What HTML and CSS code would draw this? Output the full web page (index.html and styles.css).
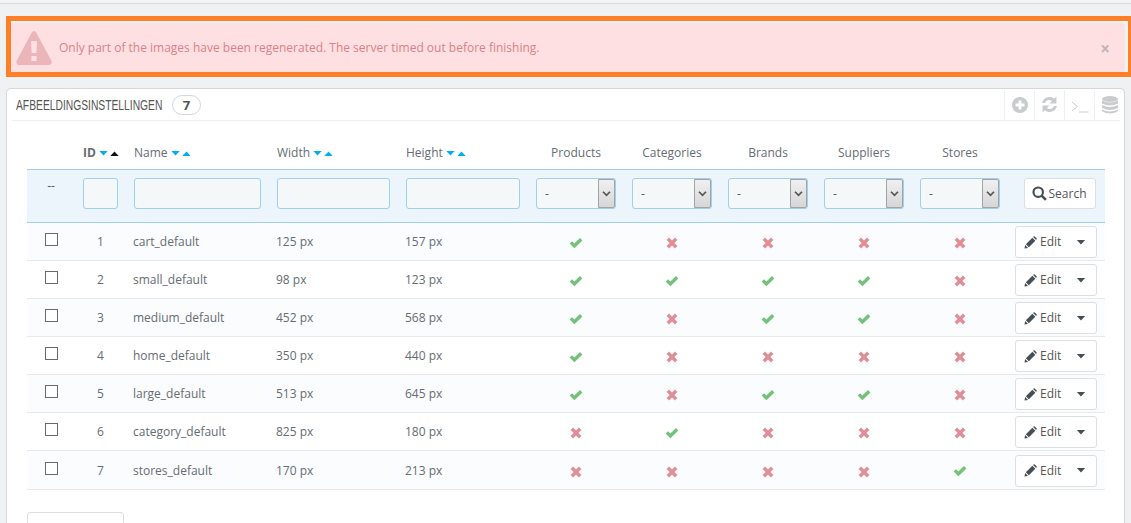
FILE: index.html
```html
<!DOCTYPE html>
<html lang="en">
<head>
<meta charset="utf-8">
<title>Afbeeldingsinstellingen</title>
<link rel="stylesheet" href="styles.css">
</head>
<body>
<svg class="defs" width="0" height="0" aria-hidden="true">
  <symbol id="yes" viewBox="0 0 14 12"><path d="M0.6 6.6 L3 4.2 L5.4 6.6 L11 1 L13.4 3.4 L5.4 11.2 Z"/></symbol>
  <symbol id="no" viewBox="0 0 12 12"><path d="M3 0.6 L6 3.6 L9 0.6 L11.4 3 L8.4 6 L11.4 9 L9 11.4 L6 8.4 L3 11.4 L0.6 9 L3.6 6 L0.6 3 Z"/></symbol>
  <symbol id="pencil" viewBox="0 0 14 14"><path d="M0.5 13.5 L1.2 9.6 L4.4 12.8 Z M2 8.8 L9 1.8 L12.2 5 L5.2 12 Z M9.8 1 L10.6 0.4 Q11 0.1 11.5 0.5 L13.5 2.5 Q13.9 3 13.5 3.4 L13 4.2 Z"/></symbol>
  <symbol id="caret" viewBox="0 0 10 6"><path d="M0 0 H10 L5 5.5 Z"/></symbol>
  <symbol id="chev" viewBox="0 0 10 8"><path d="M1 2 L5 6 L9 2" fill="none" stroke="currentColor" stroke-width="2"/></symbol>
</svg>
<div class="topline"></div>
<div class="frame">
  <div class="alert">
    <svg class="alert-icon" viewBox="0 0 36 34"><path fill-rule="evenodd" d="M18 0 Q19.5 0 20.5 2 L35.5 30 Q36.5 33.5 33 34 H3 Q-0.5 33.5 0.5 30 L15.5 2 Q16.5 0 18 0 Z M15 10 L15.6 22 H20.4 L21 10 Z M15.4 25 V30 H20.6 V25 Z"/></svg>
    <span class="alert-text">Only part of the images have been regenerated. The server timed out before finishing.</span>
    <span class="alert-close">×</span>
  </div>
</div>
<div class="panel">
  <div class="panel-head">
    <span class="title"><span class="title-text">AFBEELDINGSINSTELLINGEN</span></span>
    <span class="count">7</span>
    <div class="tools">
      <span class="tool"><svg class="tool-icon" viewBox="0 0 16 16"><path fill-rule="evenodd" d="M8 0 A8 8 0 1 1 8 16 A8 8 0 1 1 8 0 Z M6.6 3.5 V6.6 H3.5 V9.4 H6.6 V12.5 H9.4 V9.4 H12.5 V6.6 H9.4 V3.5 Z"/></svg></span>
      <span class="tool"><svg class="tool-icon refresh" viewBox="0 0 16 16"><path d="M14.5 0.5 V7 H8 L10.4 4.6 A4.3 4.3 0 0 0 3.7 6.5 H1 A7 7 0 0 1 12.4 2.6 Z M1.5 15.5 V9 H8 L5.6 11.4 A4.3 4.3 0 0 0 12.3 9.5 H15 A7 7 0 0 1 3.6 13.4 Z"/></svg></span>
      <span class="tool"><svg class="tool-icon term" viewBox="0 0 18 12"><path d="M1 1 L6.5 5.5 L1 10 M8 11 H17.5" fill="none" stroke-width="1"/></svg></span>
      <span class="tool"><svg class="tool-icon db" viewBox="0 0 16 18"><ellipse cx="8" cy="3" rx="8" ry="3"/><path d="M0 4.6 Q8 8.6 16 4.6 V7.6 Q8 11.6 0 7.6 Z M0 9 Q8 13 16 9 V12 Q8 16 0 12 Z M0 13.4 Q8 17.4 16 13.4 V15 Q8 20 0 15 Z"/></svg></span>
    </div>
  </div>
  <table class="grid">
    <colgroup>
      <col class="c-check"><col class="c-id"><col class="c-name"><col class="c-w"><col class="c-h">
      <col class="c-sel"><col class="c-sel"><col class="c-sel"><col class="c-sel"><col class="c-sel"><col class="c-act">
    </colgroup>
    <thead>
      <tr class="heads">
        <th></th>
        <th class="left id-head">ID<span class="sort"><svg class="sort-down"><use href="#caret"/></svg><svg class="sort-up active"><use href="#caret"/></svg></span></th>
        <th class="left">Name<span class="sort"><svg class="sort-down"><use href="#caret"/></svg><svg class="sort-up"><use href="#caret"/></svg></span></th>
        <th class="left">Width<span class="sort"><svg class="sort-down"><use href="#caret"/></svg><svg class="sort-up"><use href="#caret"/></svg></span></th>
        <th class="left">Height<span class="sort"><svg class="sort-down"><use href="#caret"/></svg><svg class="sort-up"><use href="#caret"/></svg></span></th>
        <th>Products</th><th>Categories</th><th>Brands</th><th>Suppliers</th><th>Stores</th><th></th>
      </tr>
      <tr class="filters">
        <th class="dashes">--</th>
        <th><input class="field" type="text" aria-label="ID"></th>
        <th><input class="field" type="text" aria-label="Name"></th>
        <th><input class="field" type="text" aria-label="Width"></th>
        <th><input class="field" type="text" aria-label="Height"></th>
        <th><div class="select"><select aria-label="Products"><option>-</option></select><span class="arrow"><svg><use href="#chev"/></svg></span></div></th>
        <th><div class="select"><select aria-label="Categories"><option>-</option></select><span class="arrow"><svg><use href="#chev"/></svg></span></div></th>
        <th><div class="select"><select aria-label="Brands"><option>-</option></select><span class="arrow"><svg><use href="#chev"/></svg></span></div></th>
        <th><div class="select"><select aria-label="Suppliers"><option>-</option></select><span class="arrow"><svg><use href="#chev"/></svg></span></div></th>
        <th><div class="select"><select aria-label="Stores"><option>-</option></select><span class="arrow"><svg><use href="#chev"/></svg></span></div></th>
        <th class="search-cell"><button class="btn search" type="button"><svg class="search-icon" viewBox="0 0 14 14"><circle cx="5.8" cy="5.8" r="4.4" fill="none" stroke-width="2"/><path d="M9 9 L13 13" fill="none" stroke-width="2.4"/></svg>Search</button></th>
      </tr>
    </thead>
    <tbody>
      <tr><td class="chk"><span class="box"></span></td><td class="num">1</td><td>cart_default</td><td>125 px</td><td>157 px</td>
        <td class="st"><svg class="yes"><use href="#yes"/></svg></td><td class="st"><svg class="no"><use href="#no"/></svg></td><td class="st"><svg class="no"><use href="#no"/></svg></td><td class="st"><svg class="no"><use href="#no"/></svg></td><td class="st"><svg class="no"><use href="#no"/></svg></td>
        <td class="act"><button class="btn edit" type="button"><svg class="pencil"><use href="#pencil"/></svg>Edit<svg class="drop"><use href="#caret"/></svg></button></td></tr>
      <tr><td class="chk"><span class="box"></span></td><td class="num">2</td><td>small_default</td><td>98 px</td><td>123 px</td>
        <td class="st"><svg class="yes"><use href="#yes"/></svg></td><td class="st"><svg class="yes"><use href="#yes"/></svg></td><td class="st"><svg class="yes"><use href="#yes"/></svg></td><td class="st"><svg class="yes"><use href="#yes"/></svg></td><td class="st"><svg class="no"><use href="#no"/></svg></td>
        <td class="act"><button class="btn edit" type="button"><svg class="pencil"><use href="#pencil"/></svg>Edit<svg class="drop"><use href="#caret"/></svg></button></td></tr>
      <tr><td class="chk"><span class="box"></span></td><td class="num">3</td><td>medium_default</td><td>452 px</td><td>568 px</td>
        <td class="st"><svg class="yes"><use href="#yes"/></svg></td><td class="st"><svg class="no"><use href="#no"/></svg></td><td class="st"><svg class="yes"><use href="#yes"/></svg></td><td class="st"><svg class="yes"><use href="#yes"/></svg></td><td class="st"><svg class="no"><use href="#no"/></svg></td>
        <td class="act"><button class="btn edit" type="button"><svg class="pencil"><use href="#pencil"/></svg>Edit<svg class="drop"><use href="#caret"/></svg></button></td></tr>
      <tr><td class="chk"><span class="box"></span></td><td class="num">4</td><td>home_default</td><td>350 px</td><td>440 px</td>
        <td class="st"><svg class="yes"><use href="#yes"/></svg></td><td class="st"><svg class="no"><use href="#no"/></svg></td><td class="st"><svg class="no"><use href="#no"/></svg></td><td class="st"><svg class="no"><use href="#no"/></svg></td><td class="st"><svg class="no"><use href="#no"/></svg></td>
        <td class="act"><button class="btn edit" type="button"><svg class="pencil"><use href="#pencil"/></svg>Edit<svg class="drop"><use href="#caret"/></svg></button></td></tr>
      <tr><td class="chk"><span class="box"></span></td><td class="num">5</td><td>large_default</td><td>513 px</td><td>645 px</td>
        <td class="st"><svg class="yes"><use href="#yes"/></svg></td><td class="st"><svg class="no"><use href="#no"/></svg></td><td class="st"><svg class="yes"><use href="#yes"/></svg></td><td class="st"><svg class="yes"><use href="#yes"/></svg></td><td class="st"><svg class="no"><use href="#no"/></svg></td>
        <td class="act"><button class="btn edit" type="button"><svg class="pencil"><use href="#pencil"/></svg>Edit<svg class="drop"><use href="#caret"/></svg></button></td></tr>
      <tr><td class="chk"><span class="box"></span></td><td class="num">6</td><td>category_default</td><td>825 px</td><td>180 px</td>
        <td class="st"><svg class="no"><use href="#no"/></svg></td><td class="st"><svg class="yes"><use href="#yes"/></svg></td><td class="st"><svg class="no"><use href="#no"/></svg></td><td class="st"><svg class="no"><use href="#no"/></svg></td><td class="st"><svg class="no"><use href="#no"/></svg></td>
        <td class="act"><button class="btn edit" type="button"><svg class="pencil"><use href="#pencil"/></svg>Edit<svg class="drop"><use href="#caret"/></svg></button></td></tr>
      <tr><td class="chk"><span class="box"></span></td><td class="num">7</td><td>stores_default</td><td>170 px</td><td>213 px</td>
        <td class="st"><svg class="no"><use href="#no"/></svg></td><td class="st"><svg class="no"><use href="#no"/></svg></td><td class="st"><svg class="no"><use href="#no"/></svg></td><td class="st"><svg class="no"><use href="#no"/></svg></td><td class="st"><svg class="yes"><use href="#yes"/></svg></td>
        <td class="act"><button class="btn edit" type="button"><svg class="pencil"><use href="#pencil"/></svg>Edit<svg class="drop"><use href="#caret"/></svg></button></td></tr>
    </tbody>
  </table>
  <div class="bulk"></div>
</div>
</body>
</html>
```
FILE: styles.css
```css
* { box-sizing: border-box; }
html, body { height: 523px; overflow: hidden; }
body {
  margin: 0;
  background: #eff1f2;
  color: #555;
  font: 12px/18px "Open Sans", sans-serif;
}
.defs { display: block; height: 0; }
.topline { height: 4px; border-bottom: 1px solid #d9dbdc; background: #f3f4f5; }
.frame {
  margin: 12px 0 0 6px;
  height: 61px;
  border: 5px solid #ff7f27;
  width: 1127px;
  padding-top: 2px;
}
.alert {
  display: flex;
  align-items: center;
  height: 49px;
  width: 1114px;
  padding: 0 0 0 5px;
  background: #ffe0e2;
  border-radius: 3px;
}
.alert-icon { width: 36px; height: 34px; fill: #ebb5b9; flex: none; }
.alert-text { margin-left: 7px; color: #d9808a; flex: 1; }
.alert-close { color: #c6b3b7; font: bold 17px/18px "Open Sans", sans-serif; margin-right: 15px; margin-top: 2px; }
.panel {
  margin: 11px 6px 0 6px;
  background: #fff;
  border: 1px solid #d3d8db;
  border-bottom: 0;
  border-radius: 5px 5px 0 0;
  padding: 0 20px;
  height: 435px;
  overflow: hidden;
}
.panel-head {
  display: flex;
  align-items: center;
  height: 32px;
  margin: 0 -15px;
  padding-left: 4px;
  border-bottom: 1px solid #eef0f1;
  width: 1108px;
}
.title { display: block; width: 146px; height: 20px; overflow: visible; }
.title-text {
  display: inline-block;
  transform: scaleX(0.735);
  transform-origin: left center;
  white-space: nowrap;
  font: 14px/20px "Liberation Sans", sans-serif;
  color: #555;
}
.count {
  margin-left: 10px;
  width: 29px;
  height: 20px;
  border: 1px solid #d3d8db;
  border-radius: 10px;
  text-align: center;
  font: bold 13px/18px "Open Sans", sans-serif;
}
.tools { display: flex; margin-left: auto; height: 30px; margin-right: -4px; }
.tool {
  width: 30px;
  display: flex;
  align-items: center;
  justify-content: center;
  border-left: 1px solid #eef0f1;
}
.tool-icon { width: 16px; height: 16px; fill: #c8cccd; stroke: #c8cccd; stroke-width: 0; }
.tool-icon.refresh { width: 17px; height: 17px; }
.tool-icon.term { width: 18px; height: 12px; fill: none; stroke-width: 1; margin-top: 4px; }
.tool-icon.db { height: 18px; }
.grid {
  margin-top: 12px;
  width: 1078px;
  table-layout: fixed;
  border-collapse: collapse;
}
.c-check { width: 48px; }
.c-id { width: 51px; }
.c-name { width: 143px; }
.c-w { width: 129px; }
.c-h { width: 130px; }
.c-sel { width: 96px; }
.c-act { width: 97px; }
.heads th {
  height: 36px;
  padding: 4px 8px 0;
  font-weight: 400;
  color: #656d73;
  text-align: center;
  white-space: nowrap;
}
.heads th.left { text-align: left; }
.heads th.id-head { font-weight: 700; }
.sort { display: inline-flex; gap: 2px; margin-left: 3px; vertical-align: 1px; }
.sort svg { width: 9px; height: 5px; fill: #00aff0; display: block; }
.sort .sort-up { transform: scaleY(-1); }
.sort .active { fill: #111; }
.filters th {
  height: 53px;
  padding: 0 8px 4px;
  background: #edf5fc;
  border-top: 1px solid #a0d0eb;
  border-bottom: 1px solid #a0d0eb;
  font-weight: 400;
}
.filters .dashes { text-align: center; padding: 0 0 20px; color: #555; }
.field {
  display: block;
  width: 100%;
  height: 31px;
  background: #f5f8f9;
  border: 1px solid #a0d0eb;
  border-radius: 3px;
}
.select { position: relative; width: 80px; height: 31px; }
.select select {
  appearance: none;
  display: block;
  width: 100%;
  height: 100%;
  padding: 0 0 0 8px;
  background: #f5f8f9;
  border: 1px solid #a0d0eb;
  border-radius: 3px;
  color: #555;
  font: 12px "Open Sans", sans-serif;
}
.arrow {
  position: absolute;
  right: 1px;
  top: 1px;
  bottom: 1px;
  width: 17px;
  display: flex;
  align-items: center;
  justify-content: center;
  background: linear-gradient(#f0f0f0, #d6d6d6);
  border: 1px solid #a3a3a3;
  border-radius: 0 2px 2px 0;
  color: #555;
}
.arrow svg { width: 9px; height: 7px; }
.search-cell { text-align: left; }
.filters .search-cell { padding: 0 0 4px 16px; }
.btn {
  display: inline-flex;
  align-items: center;
  background: #fff;
  border: 1px solid #dcdfe0;
  border-radius: 3px;
  color: #555;
  font: 12px/18px "Open Sans", sans-serif;
  padding: 0;
}
.search { width: 72px; height: 31px; justify-content: center; }
.search-icon { width: 15px; height: 15px; fill: none; stroke: #454f55; margin-right: 2px; margin-left: -2px; }
tbody tr { height: 38px; border-bottom: 1px solid #e7eaec; }
tbody tr:last-child { height: 39px; }
tbody tr:nth-child(odd) { background: #fbfcfe; }
tbody td { padding: 2px 7px 0; color: #656d73; }
tbody td.chk { padding-left: 18px; }
.box {
  display: block;
  width: 13px;
  height: 13px;
  margin-top: -5px;
  border: 1px solid #6a6a6a;
  background: #fff;
}
tbody td.num { text-align: center; padding: 2px 0 0; }
.st { text-align: center; }
.st svg { display: inline-block; vertical-align: middle; }
.yes { width: 14px; height: 12px; fill: #72c279; }
.no { width: 12px; height: 12px; fill: #e08e95; margin-top: 1px; }
tbody td.act { padding: 2px 0 0 7px; }
.edit { width: 82px; height: 32px; padding-left: 8px; vertical-align: middle; }
.pencil { width: 13px; height: 13px; fill: #454f55; margin-right: 3px; }
.drop { width: 10px; height: 5px; fill: #454f55; margin-left: auto; margin-right: 10px; }
.bulk {
  margin-top: 22px;
  width: 97px;
  height: 32px;
  background: #fff;
  border: 1px solid #dcdfe0;
  border-radius: 3px;
}
```
